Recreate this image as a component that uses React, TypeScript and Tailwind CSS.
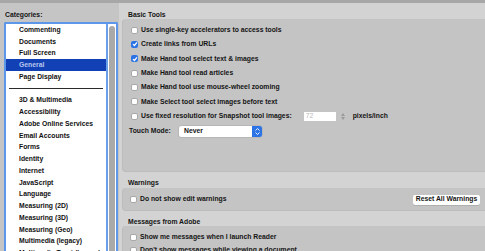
import React from "react";

const font = { fontFamily: '"Liberation Sans", Arial, sans-serif' };

function Box({ checked }: { checked?: boolean }) {
  if (checked) {
    return (
      <span className="w-[7px] h-[7px] rounded-[2px] bg-[#2c74e6] flex items-center justify-center shrink-0">
        <svg width="6" height="6" viewBox="0 0 6 6">
          <path d="M1 3.1 L2.4 4.5 L5 1.3" stroke="white" strokeWidth="1.2" fill="none" />
        </svg>
      </span>
    );
  }
  return <span className="w-[7px] h-[7px] rounded-[2px] bg-white border-[0.5px] border-[#a8a8a8] shrink-0" />;
}

function Row({ label, checked, children }: { label: string; checked?: boolean; children?: React.ReactNode }) {
  return (
    <div className="h-[14.33px] flex items-center pl-[8px]">
      <Box checked={checked} />
      <span className="ml-[3px] whitespace-nowrap">{label}</span>
      {children}
    </div>
  );
}

const cats1 = ["Commenting", "Documents", "Full Screen", "General", "Page Display"];
const cats2 = [
  "3D & Multimedia",
  "Accessibility",
  "Adobe Online Services",
  "Email Accounts",
  "Forms",
  "Identity",
  "Internet",
  "JavaScript",
  "Language",
  "Measuring (2D)",
  "Measuring (3D)",
  "Measuring (Geo)",
  "Multimedia (legacy)",
  "Multimedia Trust (legacy)",
];

function Cat({ name }: { name: string }) {
  const sel = name === "General";
  return (
    <div
      className={
        "h-[11.75px] shrink-0 flex items-center pl-[13px] whitespace-nowrap " +
        (sel ? "bg-[#1240b5] text-[#b9c6ee]" : "text-[#111]")
      }
    >
      {name}
    </div>
  );
}

export default function App() {
  return (
    <div
      className="w-[485px] h-[251px] overflow-hidden flex flex-col bg-[#c5c5c5] text-[6.8px] font-bold text-[#141414]"
      style={font}
    >
      <div className="h-[3px] bg-[#a7a7a7] shrink-0" />
      <div className="flex flex-1 min-h-0">
        {/* Left */}
        <div className="w-[119px] shrink-0 flex flex-col pl-[4px] pr-[1px] min-h-0">
          <div className="h-[19px] shrink-0 flex items-end pb-[3px] pl-[1px] leading-none">Categories:</div>
          <div className="flex-1 min-h-0 overflow-hidden border-2 border-b-0 border-[#5d97ea] bg-white flex rounded-tl-[2px] rounded-tr-[2px]">
            <div className="flex-1 min-w-0 flex flex-col">
              {cats1.map((c) => (
                <Cat key={c} name={c} />
              ))}
              <div className="h-[11.75px] shrink-0 flex items-center px-[3px]">
                <div className="h-[1px] w-full bg-[#2a2a2a]" />
              </div>
              {cats2.map((c) => (
                <Cat key={c} name={c} />
              ))}
            </div>
            <div className="w-[2px] bg-[#6a9fe9] shrink-0" />
            <div className="w-[8px] shrink-0 bg-white flex justify-center pt-[2px]">
              <div className="w-[6px] h-full rounded-t-[3px] bg-[#a9a9a9]" />
            </div>
          </div>
        </div>
        {/* Right */}
        <div className="flex-1 min-w-0 bg-[#d3d3d3] flex flex-col min-h-0">
          <div className="h-[16px] shrink-0 flex items-end pb-0 pl-[9px] leading-none">Basic Tools</div>
          <div className="h-[153px] shrink-0 ml-[3px] bg-[#c4c4c4] rounded-l-[4px] border-l border-b border-[#bcbcbc] pt-[4px]">
            <Row label="Use single-key accelerators to access tools" />
            <Row label="Create links from URLs" checked />
            <Row label="Make Hand tool select text & images" checked />
            <Row label="Make Hand tool read articles" />
            <Row label="Make Hand tool use mouse-wheel zooming" />
            <Row label="Make Select tool select images before text" />
            <Row label="Use fixed resolution for Snapshot tool images:">
              <div className="ml-[12px] w-[32px] h-[9px] bg-white flex items-center pl-[2px] text-[#b9b9b9] font-normal">
                72
              </div>
              <div className="ml-[5px] flex flex-col items-center gap-[1px]">
                <svg width="4" height="3" viewBox="0 0 4 3">
                  <path d="M0 3 L2 0 L4 3 Z" fill="#9a9a9a" />
                </svg>
                <svg width="4" height="3" viewBox="0 0 4 3">
                  <path d="M0 0 L2 3 L4 0 Z" fill="#9a9a9a" />
                </svg>
              </div>
              <span className="ml-[8px]">pixels/inch</span>
            </Row>
            <div className="h-[14px] flex items-center pl-[6px] mt-[1px]">
              <span className="w-[50px]">Touch Mode:</span>
              <div className="w-[83px] h-[11px] bg-white rounded-[2px] flex items-center shadow-[0_0_0_0.5px_#aaa]">
                <span className="flex-1 pl-[5px]">Never</span>
                <div className="w-[10px] h-full bg-[#2c74e6] rounded-r-[2px] flex flex-col items-center justify-center gap-[1px]">
                  <svg width="5" height="3" viewBox="0 0 5 3">
                    <path d="M0.5 2.5 L2.5 0.5 L4.5 2.5" stroke="white" strokeWidth="0.9" fill="none" />
                  </svg>
                  <svg width="5" height="3" viewBox="0 0 5 3">
                    <path d="M0.5 0.5 L2.5 2.5 L4.5 0.5" stroke="white" strokeWidth="0.9" fill="none" />
                  </svg>
                </div>
              </div>
            </div>
          </div>
          <div className="h-[16px] shrink-0 flex items-end pb-[1px] pl-[9px] leading-none">Warnings</div>
          <div className="h-[23px] shrink-0 ml-[3px] bg-[#c4c4c4] rounded-l-[4px] border-l border-b border-[#bcbcbc] flex items-center pr-[5px]">
            <div className="flex-1 flex items-center pl-[7px] h-full">
              <Box />
              <span className="ml-[3px]">Do not show edit warnings</span>
            </div>
            <div className="w-[67px] h-[10px] bg-white rounded-[2px] flex items-center justify-center shadow-[0_0.5px_0.5px_#999] mt-[1px]">
              Reset All Warnings
            </div>
          </div>
          <div className="h-[15px] shrink-0 flex items-end pb-0 pl-[9px] leading-none">Messages from Adobe</div>
          <div className="flex-1 min-h-0 ml-[3px] bg-[#c4c4c4] rounded-tl-[4px] border-l border-[#bcbcbc] pt-[5px]">
            <div className="h-[13px] flex items-center pl-[7px]">
              <Box />
              <span className="ml-[3px]">Show me messages when I launch Reader</span>
            </div>
            <div className="h-[13px] flex items-center pl-[7px]">
              <Box />
              <span className="ml-[3px]">Don't show messages while viewing a document</span>
            </div>
          </div>
        </div>
      </div>
    </div>
  );
}
